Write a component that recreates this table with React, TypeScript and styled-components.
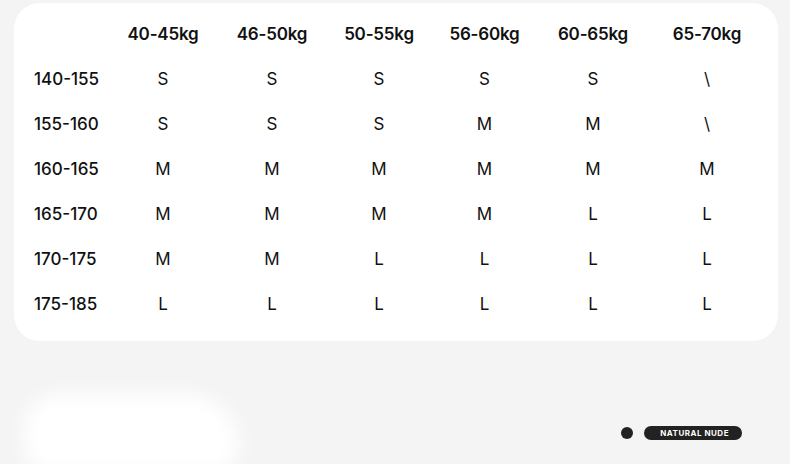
import React from 'react';
import styled, { createGlobalStyle } from 'styled-components';

const GlobalStyle = createGlobalStyle`
  body {
    margin: 0;
    background: #f4f4f4;
    font-family: "Inter", "Noto Sans", sans-serif;
    color: #111;
  }
`;

const Page = styled.div`
  width: 790px;
  height: 464px;
  padding: 3px 12px 0 14px;
  box-sizing: border-box;
  display: flex;
  flex-direction: column;
  overflow: hidden;
`;

const Card = styled.section`
  height: 338px;
  background: #fff;
  border-radius: 26px;
  padding: 8px 0 0 20px;
  box-sizing: border-box;
`;

const Grid = styled.div`
  display: grid;
  grid-template-columns: 74px 110px 108px 106px 105px 112px 116px;
  grid-auto-rows: 45px;
`;

const Cell = styled.div<{ $head?: boolean; $label?: boolean }>`
  display: flex;
  align-items: center;
  justify-content: ${p => (p.$label ? 'flex-start' : 'center')};
  font-size: 17px;
  font-weight: ${p => (p.$head ? 600 : p.$label ? 500 : 400)};
  letter-spacing: ${p => (p.$head ? '-0.2px' : '0')};
`;

const Bottom = styled.div`
  flex: 1;
  display: flex;
  align-items: flex-end;
  justify-content: space-between;
  padding: 0 36px 0 10px;
`;

const Blob = styled.div`
  width: 215px;
  height: 78px;
  margin-bottom: -8px;
  background: #fff;
  border-radius: 40px 60px 30px 30px;
  filter: blur(10px);
`;

const Legend = styled.div`
  display: flex;
  align-items: center;
  gap: 11px;
  margin-bottom: 24px;
`;

const Dot = styled.span`
  width: 12px;
  height: 12px;
  border-radius: 50%;
  background: #222;
`;

const Pill = styled.span`
  background: #222;
  color: #fff;
  border-radius: 8px;
  height: 14px;
  padding: 0 13px 0 16px;
  display: flex;
  align-items: center;
  font-size: 8px;
  font-weight: 700;
  letter-spacing: 0.5px;
`;

const heads = ['40-45kg', '46-50kg', '50-55kg', '56-60kg', '60-65kg', '65-70kg'];

const rows: [string, string[]][] = [
  ['140-155', ['S', 'S', 'S', 'S', 'S', '\\']],
  ['155-160', ['S', 'S', 'S', 'M', 'M', '\\']],
  ['160-165', ['M', 'M', 'M', 'M', 'M', 'M']],
  ['165-170', ['M', 'M', 'M', 'M', 'L', 'L']],
  ['170-175', ['M', 'M', 'L', 'L', 'L', 'L']],
  ['175-185', ['L', 'L', 'L', 'L', 'L', 'L']],
];

const App: React.FC = () => (
  <>
    <GlobalStyle />
    <Page>
      <Card>
        <Grid>
          <Cell />
          {heads.map(h => (
            <Cell key={h} $head>{h}</Cell>
          ))}
          {rows.map(([label, sizes]) => (
            <React.Fragment key={label}>
              <Cell $label>{label}</Cell>
              {sizes.map((s, i) => (
                <Cell key={i}>{s}</Cell>
              ))}
            </React.Fragment>
          ))}
        </Grid>
      </Card>
      <Bottom>
        <Blob />
        <Legend>
          <Dot />
          <Pill>NATURAL NUDE</Pill>
        </Legend>
      </Bottom>
    </Page>
  </>
);

export default App;
